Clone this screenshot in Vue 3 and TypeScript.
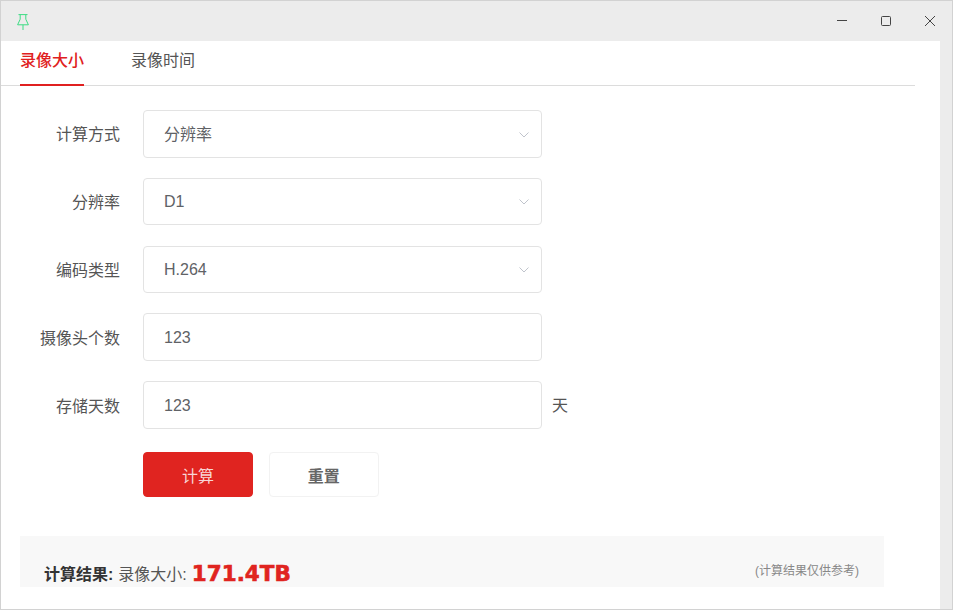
<script setup lang="ts">
interface Field { label: string; value: string; select: boolean; unit?: string; cjk?: boolean }
const fields: Field[] = [
  { label: '计算方式', value: '分辨率', select: true, cjk: true },
  { label: '分辨率', value: 'D1', select: true },
  { label: '编码类型', value: 'H.264', select: true },
  { label: '摄像头个数', value: '123', select: false },
  { label: '存储天数', value: '123', select: false, unit: '天' },
]
</script>

<template>
  <div class="window">
    <header class="titlebar">
      <svg class="pin" width="12" height="16" viewBox="0 0 12 16" fill="none" stroke="#3ddc84" stroke-width="1">
        <path d="M1.5.6h9M3.2.6v4.6L.6 10.8h10.8L8.8 5.2V.6M6 10.8V16" />
      </svg>
      <div class="controls">
        <svg width="10" height="10" viewBox="0 0 10 10" fill="none" stroke="#444" stroke-width="1"><path d="M0 4.5h10" /></svg>
        <svg width="10" height="10" viewBox="0 0 10 10" fill="none" stroke="#444" stroke-width="1"><rect x=".5" y=".5" width="9" height="9" rx="1" /></svg>
        <svg width="10" height="10" viewBox="0 0 10 10" fill="none" stroke="#444" stroke-width="1"><path d="M0 0l10 10M10 0 0 10" /></svg>
      </div>
    </header>
    <div class="body">
      <main class="main">
        <nav class="tabs">
          <span class="tab active">录像大小</span>
          <span class="tab">录像时间</span>
        </nav>
        <form class="form" @submit.prevent>
          <div v-for="f in fields" :key="f.label" class="row">
            <label class="label" :class="{ lift: f.cjk }">{{ f.label }}</label>
            <div class="input">
              <span :class="{ lift: f.cjk }">{{ f.value }}</span>
              <svg v-if="f.select" class="chev" width="10" height="6" viewBox="0 0 10 6" fill="none" stroke="#c0c4cc" stroke-width="1"><path d="M.5.5 5 5 9.5.5" /></svg>
            </div>
            <span v-if="f.unit" class="unit">{{ f.unit }}</span>
          </div>
          <div class="actions">
            <button class="btn primary" type="button">计算</button>
            <button class="btn plain" type="button">重置</button>
          </div>
        </form>
        <section class="result">
          <div class="summary">
            <b class="title">计算结果:</b>
            <span class="name">录像大小:</span>
            <b class="amount">171.4TB</b>
          </div>
          <span class="note">(计算结果仅供参考)</span>
        </section>
      </main>
    </div>
  </div>
</template>

<style>
html, body { margin: 0; background: #fff; }
</style>

<style scoped>
.window {
  box-sizing: border-box;
  width: 953px;
  height: 610px;
  border: 1px solid #d2d2d2;
  background: #ececec;
  display: flex;
  flex-direction: column;
  overflow: hidden;
  font-family: "Liberation Sans", "Noto Sans CJK SC", sans-serif;
  color: #606266;
}
.titlebar {
  height: 40px;
  flex: none;
  display: flex;
  align-items: center;
  justify-content: space-between;
  padding: 0 17px 0 16px;
}
.pin { margin-top: 1px; }
.controls { display: flex; gap: 34px; }
.controls svg { display: block; }
.body { flex: 1; display: flex; min-height: 0; }
.main {
  width: 939px;
  height: 100%;
  background: #fff;
  overflow: hidden;
}
.tabs {
  width: 914px;
  height: 45px;
  box-sizing: border-box;
  border-bottom: 1px solid #dcdcdc;
  padding-left: 19px;
  display: flex;
  gap: 47px;
}
.tab {
  height: 45px;
  box-sizing: border-box;
  font-size: 16px;
  line-height: 39px;
  color: #555;
}
.tab.active {
  color: #e02020;
  font-weight: 500;
  border-bottom: 2px solid #e02020;
}
.form {
  padding-top: 24px;
  display: flex;
  flex-direction: column;
  gap: 20.25px;
}
.row { display: flex; align-items: center; height: 47.5px; }
.label {
  width: 119px;
  text-align: right;
  font-size: 16px;
  color: #555;
  flex: none;
  padding-bottom: .25px;
}
.input {
  margin-left: 23px;
  box-sizing: border-box;
  width: 399px;
  height: 47.5px;
  border: 1px solid #e3e3e3;
  border-radius: 4px;
  padding: 1.75px 20px 0;
  display: flex;
  align-items: center;
  justify-content: space-between;
  font-size: 16px;
}
.lift { padding-bottom: 4px; }
.label.lift { padding-bottom: 2.25px; }
.chev { margin-right: -8px; }
.unit { margin-left: 10px; font-size: 16px; color: #555; padding-bottom: 1.25px; }
.actions { display: flex; gap: 15.75px; margin: 3.25px 0 0 142px; }
.btn {
  width: 110px;
  height: 44.5px;
  box-sizing: border-box;
  border-radius: 4px;
  font-family: inherit;
  font-size: 16px;
  padding: 1px 0 0;
}
.primary { background: #e02420; border: 1px solid #e02420; color: #f8d5d5; }
.plain { background: #fff; border: 1px solid #f2f2f2; color: #666; font-weight: 700; }
.result {
  margin: 39.5px 0 0 19px;
  width: 864px;
  height: 51px;
  box-sizing: border-box;
  background: #f8f8f8;
  padding: 24px 25px 0 24px;
  display: flex;
  justify-content: space-between;
  align-items: flex-start;
}
.summary { display: flex; align-items: center; height: 26px; white-space: nowrap; }
.title { font-size: 16px; color: #333; }
.name { font-size: 16px; color: #555; margin-left: 5px; }
.amount {
  font-family: "DejaVu Sans", sans-serif;
  font-size: 21.5px;
  color: #e02420;
  margin-left: 5px;
  -webkit-text-stroke: .6px #e02420;
}
.note { font-size: 12px; color: #888; line-height: 22px; }
</style>
